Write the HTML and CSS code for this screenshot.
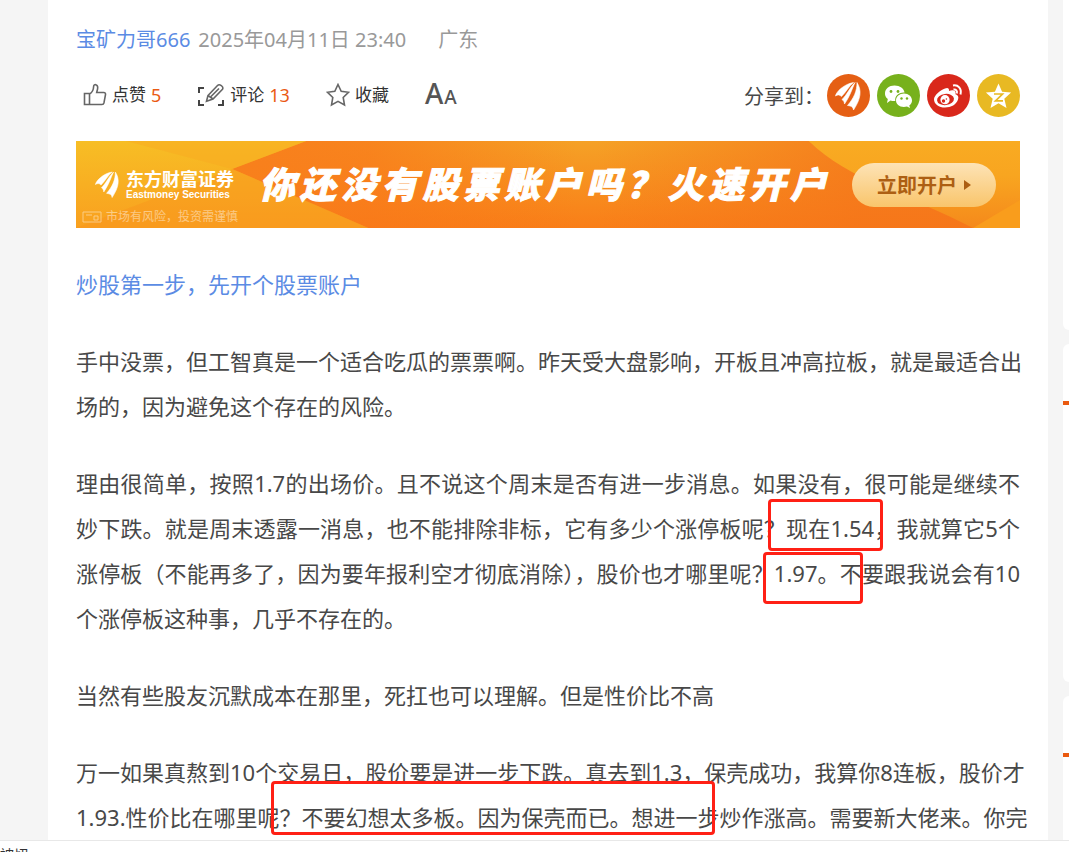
FILE: index.html
```html
<!DOCTYPE html>
<html lang="zh-CN">
<head>
<meta charset="utf-8">
<meta name="viewport" content="width=device-width, initial-scale=1">
<title>股吧</title>
<link rel="stylesheet" href="styles.css">
</head>
<body>
<div class="page">
  <main class="post">
    <header class="meta">
      <a class="author" href="#">宝矿力哥666</a>
      <time class="date">2025年04月11日 23:40</time>
      <span class="place">广东</span>
    </header>
    <div class="toolbar">
      <div class="actions">
        <button class="action" type="button">
          <svg class="icon" viewBox="0 0 24 24"><path d="M1.500 10.500h5v11h-5zM6.500 11c3-1.500 4-4 4.200-8 .2-2 4-2 4 1.500 0 2-.7 3.500-1 5h7c1.500 0 2 1 1.800 2.200l-1.500 8c-.3 1.300-1 1.800-2 1.800H6.500"/></svg>
          <span>点赞</span><span class="count">5</span>
        </button>
        <button class="action comment" type="button">
          <svg class="icon wide" viewBox="0 0 28 24"><path class="thick" d="M7 5H2v5M2 17v5h5M21 22h5v-5"/><path d="M11 12.500L20.500 2.500c2-2 6.500 1 5 3.800L16 16l-6.500 2.200zM14 13.500l8-8M11 12.500l5 3.500"/></svg>
          <span>评论</span><span class="count">13</span>
        </button>
        <button class="action favorite" type="button">
          <svg class="icon" viewBox="0 0 24 24"><path d="M12 1.500l3.200 6.800 7.300 1-5.300 5.200 1.300 7.500L12 18.300 5.500 22l1.300-7.500L1.500 9.300l7.300-1z"/></svg>
          <span>收藏</span>
        </button>
        <button class="action size" type="button" aria-label="字号"><span class="big-a">A</span><span class="small-a">A</span></button>
      </div>
      <div class="share">
        <span class="share-label">分享到：</span>
        <div class="badges">
          <a href="#" aria-label="东方财富"><svg class="badge" viewBox="0 0 43 43"><circle class="orange" cx="21.500" cy="21.500" r="21.500"/><path class="white leaf" d="M8.500 22C9 18 17 10 26.500 8.500 22 12 19 18 14.500 22.500 12.500 20.500 10.500 20.500 8.500 22zM28 8.500C25 15 23 22 17.500 30c-.2-2.200-1-3.500-2.500-4.500C20 21 23 13 28 8.500zM30 8.500c5 8 4 16-3.500 27.500-.5-3-2-4-6-4.500C27 24 30 17 30 8.500z"/></svg></a>
          <a href="#" aria-label="微信"><svg class="badge" viewBox="0 0 43 43"><circle class="green" cx="21.500" cy="21.500" r="21.500"/><path class="white" d="M17.500 11.500c5.500 0 9.500 3 10 7-6-.3-10 3.500-9.200 8.500-1.800.2-3.300 0-4.800-.5L10 29l.8-4C8.500 23.300 8 21.500 8 19.500c0-4.500 4-8 9.500-8z"/><path class="white" d="M27 19.500c4.500 0 8 3 8 7 0 2.300-1 3.700-2.700 5l.7 2.500-3-1.500c-6.500 1.500-11-1.700-11-6 0-4 3.500-7 8-7z"/><g class="green"><circle cx="14" cy="17.500" r="1.400"/><circle cx="21" cy="17.500" r="1.400"/><circle cx="24.500" cy="24.500" r="1.200"/><circle cx="30" cy="24.500" r="1.200"/></g></svg></a>
          <a href="#" aria-label="微博"><svg class="badge" viewBox="0 0 43 43"><circle class="red" cx="21.500" cy="21.500" r="21.500"/><path class="white" d="M18 14.500c2-1.200 4.500-.8 4 2.500 3.500-1.300 7.500-.8 6.500 3.300 2.500.7 3.500 2.700 2.500 5.200-1.500 5-7 8-13 8-6 0-11-3.300-11-8.300 0-3.700 6.500-9.200 11-10.700z"/><ellipse class="red" cx="18.500" cy="25.500" rx="8.500" ry="5.600" transform="rotate(-6 18.500 25.500)"/><circle class="white" cx="18" cy="25.700" r="4.600"/><circle class="red" cx="16.500" cy="27" r="1.700"/><circle class="red" cx="19.400" cy="25" r=".8"/><path class="wave" d="M26 11.500c5-1 9 3 7.500 9M26.500 15.500c2.500-.5 4 1.500 3.300 4"/></svg></a>
          <a href="#" aria-label="QQ空间"><svg class="badge" viewBox="0 0 43 43"><circle class="yellow" cx="21.500" cy="21.500" r="21.500"/><path class="white" d="M21.500 9.500l3.600 8.300 9 .7-6.800 6.200 2.200 9.300-8-4.800-8 4.800 2.200-9.300-6.800-6.200 9-.7z"/><path class="zee" d="M17 20h8.500l-7 6.800H26"/></svg></a>
        </div>
      </div>
    </div>
    <a class="banner" href="#">
      <svg class="banner-bg" viewBox="0 0 943 87" preserveAspectRatio="none">
        <defs>
          <linearGradient id="base" x1="0" y1="0" x2="0" y2="1"><stop offset="0" stop-color="#f5a126"/><stop offset="1" stop-color="#f97e18"/></linearGradient>
          <linearGradient id="gold" x1="0" y1="0" x2="0" y2="1"><stop offset="0" stop-color="#f7be25"/><stop offset="1" stop-color="#f9a01f"/></linearGradient>
          <linearGradient id="deep" x1="0" y1="0" x2="1" y2="0"><stop offset="0" stop-color="#f8801c"/><stop offset=".4" stop-color="#f9781a" stop-opacity=".7"/><stop offset="1" stop-color="#fa7416" stop-opacity="0"/></linearGradient>
          <linearGradient id="glow" x1="0" y1="0" x2="1" y2="0"><stop offset="0" stop-color="#f5741a" stop-opacity="0"/><stop offset=".7" stop-color="#f5741a" stop-opacity=".75"/></linearGradient>
          <linearGradient id="edge" x1="0" y1="0" x2="0" y2="1"><stop offset="0" stop-color="#f9ab22"/><stop offset=".4" stop-color="#f8a520"/><stop offset="1" stop-color="#f5891b"/></linearGradient>
        </defs>
        <path fill="url(#base)" d="M0 0h943v87H0z"/>
        <path fill="url(#deep)" d="M225 0h275v87H292L155 28z"/>
        <path fill="url(#gold)" d="M0 0h230l-74 28L292 87H0z"/>
        <path fill="#f9a822" opacity=".45" d="M50 0h180L156 28z"/>
        <path fill="#f9941d" opacity=".45" d="M156 28L0 87h292L208 50z"/>
        <path fill="url(#glow)" d="M520 0h212c40 30 95 50 165 87H520z"/>
        <path fill="url(#edge)" d="M732 0h211v60l-47 27c-60-32-125-48-164-87z"/>
        <path fill="#f99d1c" d="M943 59v28h-47z"/>
      </svg>
      <span class="brand">
        <svg class="brand-mark" viewBox="8 8 27 29"><path class="white leaf" d="M8.500 22C9 18 17 10 26.500 8.500 22 12 19 18 14.500 22.500 12.500 20.500 10.500 20.500 8.500 22zM28 8.500C25 15 23 22 17.500 30c-.2-2.200-1-3.500-2.500-4.500C20 21 23 13 28 8.500zM30 8.500c5 8 4 16-3.500 27.500-.5-3-2-4-6-4.500C27 24 30 17 30 8.500z"/></svg>
        <span class="brand-name"><span class="brand-cn">东方财富证券</span><span class="brand-en">Eastmoney Securities</span></span>
        <span class="risk"><svg class="risk-icon" viewBox="0 0 20 12"><path d="M1 1h18v10H1zM4 4h6M12 5h4v4h-4z"/></svg>市场有风险，投资需谨慎</span>
      </span>
      <span class="headline">你还没有股票账户吗？火速开户</span>
      <span class="cta">立即开户<svg class="arrow" viewBox="0 0 7 10"><path d="M0 0l7 5-7 5z"/></svg></span>
    </a>
    <article class="content">
      <p><a href="#">炒股第一步，先开个股票账户</a></p>
      <p><span class="line">手中没票，但工智真是一个适合吃瓜的票票啊。昨天受大盘影响，开板且冲高拉板，就是最适合出</span>场的，因为避免这个存在的风险。</p>
      <p><span class="line">理由很简单，按照1.7的出场价。且不说这个周末是否有进一步消息。如果没有，很可能是继续不</span><span class="line">妙下跌。就是周末透露一消息，也不能排除非标，它有多少个涨停板呢？现在1.54，我就算它5个</span><span class="line">涨停板（不能再多了，因为要年报利空才彻底消除），股价也才哪里呢？1.97。不要跟我说会有10</span>个涨停板这种事，几乎不存在的。</p>
      <p>当然有些股友沉默成本在那里，死扛也可以理解。但是性价比不高</p>
      <p><span class="line">万一如果真熬到10个交易日，股价要是进一步下跌。真去到1.3，保壳成功，我算你8连板，股价才</span><span class="line">1.93.性价比在哪里呢？不要幻想太多板。因为保壳而已。想进一步炒作涨高。需要新大佬来。你完</span></p>
    </article>
    <span class="mark mark-price"></span>
    <span class="mark mark-target"></span>
    <span class="mark mark-advice"></span>
  </main>
  <aside class="side">
    <div class="card card-first"></div>
    <div class="card card-middle"><span class="tab"></span></div>
    <div class="card card-last"><span class="tab"></span></div>
  </aside>
</div>
<footer class="status">被切</footer>
</body>
</html>
```
FILE: styles.css
```css
* { box-sizing: border-box; }
body {
  margin: 0;
  height: 100vh;
  display: flex;
  flex-direction: column;
  overflow: hidden;
  background: #fff;
  color: #484848;
  font-family: "Noto Sans", "Noto Sans CJK SC", sans-serif;
}
a { color: inherit; text-decoration: none; }
.page {
  flex: 1;
  min-height: 0;
  display: flex;
  gap: 15px;
  padding-left: 48px;
  background: #f5f5f5;
  overflow: hidden;
}
.post {
  position: relative;
  flex: 1;
  min-width: 0;
  padding: 24px 28px 0;
  background: #fff;
}
.meta {
  display: flex;
  gap: 8px;
  font-size: 20px;
  line-height: 32px;
  color: #999;
}
.author, .content a { color: #5b8be4; }
.place { margin-left: 24px; }
.toolbar {
  display: flex;
  justify-content: space-between;
  align-items: center;
  margin-top: 17px;
  height: 44px;
}
.actions { display: flex; align-items: center; padding-left: 7px; }
.action {
  display: flex;
  align-items: center;
  gap: 5px;
  padding: 0;
  border: 0;
  background: none;
  color: #333;
  font-family: inherit;
  font-size: 17px;
  line-height: 28px;
}
.comment { margin-left: 36px; }
.favorite { margin-left: 36px; }
.size { margin-left: 36px; gap: 1px; align-items: baseline; color: #555; font-weight: 500; }
.big-a { font-size: 28px; }
.small-a { font-size: 19px; }
.count { color: #ea5a14; font-size: 18px; }
.icon { width: 24px; height: 24px; fill: none; stroke: #666; stroke-width: 1.6; }
.wide { width: 28px; }
.thick { stroke: #444; stroke-width: 2; }
.share { display: flex; align-items: center; gap: 3px; }
.badges { display: flex; gap: 7px; }
.badges a { display: flex; }
.share-label { font-size: 20px; }
.badge { width: 43px; height: 43px; }
.white { fill: #fff; }
.leaf { stroke: #fff; stroke-width: .6; }
.orange { fill: #e55f14; }
.green { fill: #77b11c; }
.red { fill: #d9281b; }
.yellow { fill: #e8b923; }
.wave { fill: none; stroke: #fff; stroke-width: 2; }
.zee { fill: none; stroke: #e8b923; stroke-width: 1.7; }
.banner {
  position: relative;
  display: flex;
  align-items: center;
  height: 87px;
  margin-top: 24px;
  padding: 0 24px 0 19px;
  color: #fff;
}
.banner-bg { position: absolute; inset: 0; width: 100%; height: 100%; }
.brand, .headline, .cta { position: relative; }
.brand { display: flex; align-items: center; gap: 6px; width: 164px; }
.brand-mark { width: 25px; height: 28px; }
.brand-name { display: flex; flex-direction: column; }
.brand-cn { font-size: 18px; line-height: 20px; font-weight: 700; }
.brand-en { font: 700 10px/12px "Liberation Sans", sans-serif; }
.risk {
  position: absolute;
  left: -13px;
  top: 40px;
  display: flex;
  align-items: center;
  gap: 4px;
  font-size: 12px;
  line-height: 16px;
  white-space: nowrap;
  opacity: .45;
}
.risk-icon { width: 20px; height: 12px; fill: none; stroke: #fff; }
.headline {
  flex: 1;
  min-width: 0;
  font-size: 36px;
  line-height: 44px;
  font-weight: 900;
  font-style: italic;
  -webkit-text-stroke: 1px #fff;
  white-space: nowrap;
  text-align-last: justify;
}
.cta {
  display: flex;
  align-items: center;
  justify-content: center;
  gap: 7px;
  width: 144px;
  height: 44px;
  margin-left: 26px;
  border-radius: 22px;
  background: linear-gradient(#fde3b6, #f9c56b);
  color: #ad5f13;
  font-size: 20px;
  font-weight: 700;
}
.arrow { width: 7px; height: 10px; fill: #ad5f13; }
.content {
  padding-top: 34px;
  font-size: 22px;
  line-height: 45px;
}
.content p { margin: 0 0 32px; white-space: nowrap; }
.line { display: block; text-align-last: justify; }
.mark { position: absolute; border: 3px solid #ff2015; border-radius: 4px; }
.mark-price { left: 720px; top: 499px; width: 115px; height: 52px; }
.mark-target { left: 715px; top: 552px; width: 100px; height: 52px; }
.mark-advice { left: 223px; top: 781px; width: 444px; height: 54px; }
.side { display: flex; flex-direction: column; gap: 14px; width: 6px; }
.card { background: #fff; border-radius: 6px 0 0 6px; }
.card-first { height: 330px; border-top-left-radius: 0; }
.card-middle { height: 338px; padding-top: 57px; }
.card-last { flex: 1; padding-top: 57px; border-bottom-left-radius: 0; }
.tab { display: block; height: 4px; background: #ea5a10; }
.status {
  height: 12px;
  overflow: hidden;
  border-top: 1px solid #e8e8e8;
  padding-top: 6px;
  font-size: 14px;
  line-height: 16px;
  color: #333;
}
```
